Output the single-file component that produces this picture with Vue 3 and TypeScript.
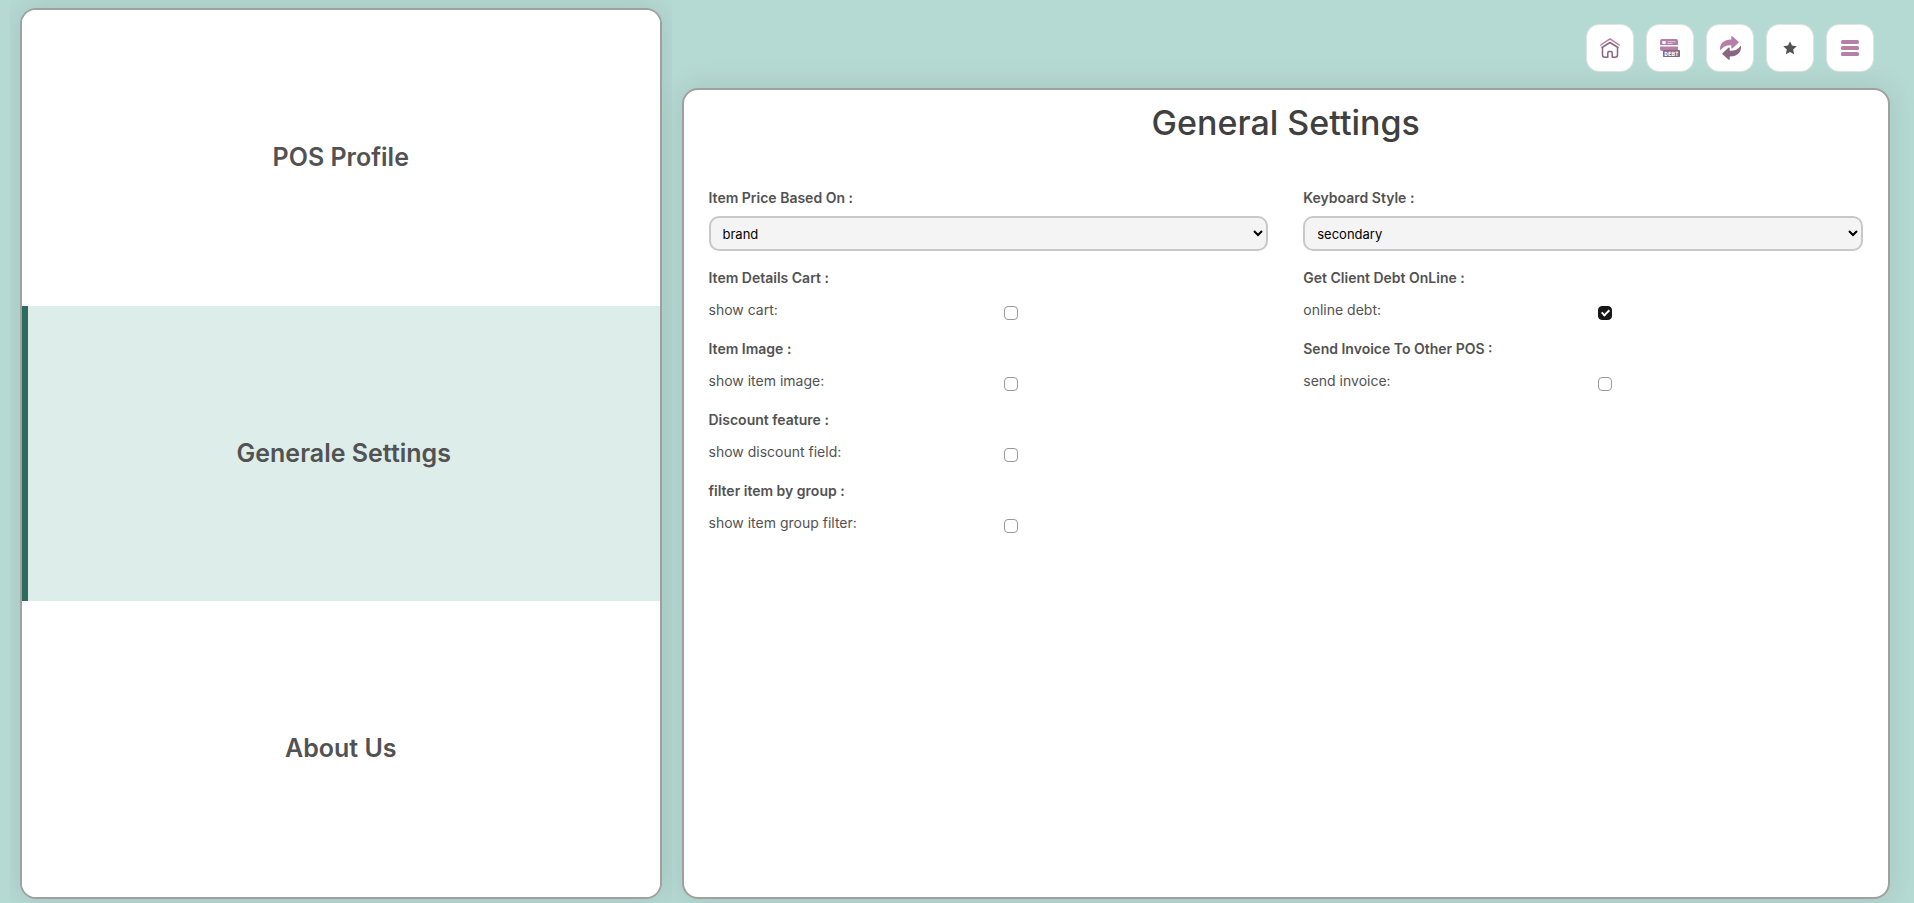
<script setup lang="ts">
import { ref } from 'vue'

interface CheckField {
  kind: 'check'
  id: string
  title: string
  label: string
  value: boolean
}
interface SelectField {
  kind: 'select'
  id: string
  title: string
  options: string[]
  value: string
}
type Field = CheckField | SelectField

const sections = ['POS Profile', 'Generale Settings', 'About Us']
const active = ref(1)

const columns = ref<Field[][]>([
  [
    { kind: 'select', id: 'price-base', title: 'Item Price Based On :', options: ['brand', 'priceList'], value: 'brand' },
    { kind: 'check', id: 'cart', title: 'Item Details Cart :', label: 'show cart:', value: false },
    { kind: 'check', id: 'image', title: 'Item Image :', label: 'show item image:', value: false },
    { kind: 'check', id: 'discount', title: 'Discount feature :', label: 'show discount field:', value: false },
    { kind: 'check', id: 'group', title: 'filter item by group :', label: 'show item group filter:', value: false },
  ],
  [
    { kind: 'select', id: 'keyboard', title: 'Keyboard Style :', options: ['primary', 'secondary'], value: 'secondary' },
    { kind: 'check', id: 'debt', title: 'Get Client Debt OnLine :', label: 'online debt:', value: true },
    { kind: 'check', id: 'invoice', title: 'Send Invoice To Other POS :', label: 'send invoice:', value: false },
  ],
])
</script>

<template>
  <div class="page">
    <aside class="side">
      <nav class="panel menu">
        <button
          v-for="(name, i) in sections"
          :key="name"
          type="button"
          class="menu-item"
          :class="{ active: i === active }"
          @click="active = i"
        >
          {{ name }}
        </button>
      </nav>
    </aside>

    <main class="content">
      <header class="toolbar">
        <button type="button" class="tool" aria-label="Home">
          <svg width="20" height="20" viewBox="0 0 20 20" fill="none" stroke-linecap="round" stroke-linejoin="round">
            <path d="M.8 7 10 .8 19.200 7" stroke="#b57fa6" stroke-width="1.500" />
            <path d="M2 9.500 10 4.500l8 5M2.500 9.200V17q0 2.200 2.200 2.200h3.100v-4.400q0-1.200 1.200-1.200h2q1.200 0 1.200 1.200v4.400h3.100q2.200 0 2.200-2.200V9.200" stroke="#8a6580" stroke-width="1.500" />
          </svg>
        </button>
        <button type="button" class="tool" aria-label="Debt">
          <svg width="20" height="18" viewBox="0 0 20 18">
            <path d="M2 0h14q2 0 2 2v4H0V2q0-2 2-2z" fill="#b57fa6" />
            <path d="M0 7.500h18v3.500H3v1H2q-2 0-2-2z" fill="#b57fa6" />
            <rect x="2.200" y="2" width="3.600" height="3" rx="1" fill="#fff" />
            <path d="M7.500 2.700h8M7.500 4.400h5" stroke="#e9d5e3" stroke-width=".8" />
            <rect x="3" y="11" width="17" height="7" rx=".8" fill="#8a6580" />
            <text class="debt-text" x="11.500" y="16.700" text-anchor="middle">DEBT</text>
          </svg>
        </button>
        <button type="button" class="tool" aria-label="Refresh">
          <svg width="21" height="24" viewBox="0 0 21 24">
            <path d="M.2 14.600C-.9 7.500 4 3.200 11.300 3.400V.8Q11.500-.4 12.600.4L18.300 5.600q.7.700 0 1.400l-5.700 5.200q-1.200.8-1.300-.6V9.200C6.500 9 3 10.500.2 14.600z" fill="#b57fa6" />
            <path d="M20.800 9.400C21.900 16.500 17 20.800 9.700 20.600v2.600q-.2 1.200-1.300.4L2.700 18.400q-.7-.7 0-1.400l5.700-5.200q1.200-.8 1.300.6v2.400c4.800.2 8.300-1.300 11.100-5.400z" fill="#8a6580" />
          </svg>
        </button>
        <button type="button" class="tool" aria-label="Favourites">
          <svg width="14" height="14" viewBox="0 0 14 14">
            <path d="m7 .3 2 4.300 4.700.6-3.500 3.200.9 4.800L7 10.900l-4.100 2.300.9-4.800L.3 5.200 5 4.600z" fill="#525252" />
          </svg>
        </button>
        <button type="button" class="tool" aria-label="Menu">
          <svg width="18" height="16" viewBox="0 0 18 16">
            <rect y="0" width="18" height="4" rx="1.600" fill="#b57fa6" />
            <rect y="6" width="18" height="4" rx="1.600" fill="#b57fa6" />
            <rect y="12" width="18" height="4" rx="1.600" fill="#b57fa6" />
          </svg>
        </button>
      </header>

      <section class="panel settings">
        <h1>General Settings</h1>
        <form class="columns" @submit.prevent>
          <div v-for="(fields, c) in columns" :key="c" class="column">
            <template v-for="field in fields" :key="field.id">
              <div v-if="field.kind === 'select'" class="select-field">
                <label class="title" :for="field.id">{{ field.title }}</label>
                <select :id="field.id" v-model="field.value">
                  <option v-for="o in field.options" :key="o" :value="o">{{ o }}</option>
                </select>
              </div>
              <div v-else class="check-field">
                <div class="title">{{ field.title }}</div>
                <div class="check-row">
                  <label :for="field.id">{{ field.label }}</label>
                  <input :id="field.id" v-model="field.value" type="checkbox" />
                </div>
              </div>
            </template>
          </div>
        </form>
      </section>
    </main>
  </div>
</template>

<style>
body {
  margin: 0;
  background: #b5dad3;
}
</style>

<style scoped>
.page {
  box-sizing: border-box;
  display: flex;
  height: 100vh;
  padding: 0 14px 0 10px;
  overflow: hidden;
  background: #b5dad3;
  color: #525252;
  font-family: Inter, "Liberation Sans", sans-serif;
  font-size: 14px;
}
.side {
  box-sizing: border-box;
  flex: 0 0 35%;
  padding: 8px 10px 4px;
  overflow: hidden;
}
.panel {
  box-sizing: border-box;
  border: 2px solid #a0a0a0;
  border-radius: 16px;
  background: #fff;
  box-shadow: 0 0 30px rgba(0, 0, 0, 0.1);
}
.menu {
  display: flex;
  flex-direction: column;
  height: 100%;
  overflow: hidden;
}
.menu-item {
  flex: 1;
  border: 0;
  padding: 0 0 2px;
  background: #fff;
  color: #525252;
  font: 600 25px/32px Inter, "Liberation Sans", sans-serif;
  cursor: pointer;
}
.menu-item.active {
  border-left: 6px solid #2d6a60;
  background: #ddede9;
}
.content {
  flex: 1;
  display: flex;
  flex-direction: column;
  min-width: 0;
  padding: 0 10px 4px;
}
.toolbar {
  display: flex;
  justify-content: flex-end;
  gap: 12px;
  padding: 24px 16px 16px;
}
.tool {
  display: grid;
  place-items: center;
  width: 48px;
  height: 48px;
  padding: 0;
  border: 1px solid #e2e2e2;
  border-radius: 13px;
  background: #fff;
  cursor: pointer;
}
.debt-text {
  fill: #fff;
  font: 700 6px "DejaVu Sans Mono", monospace;
}
.settings {
  flex: 1;
  padding: 11px 25px;
}
h1 {
  margin: 0 0 43px;
  color: #404040;
  font-size: 34px;
  line-height: 44px;
  font-weight: 500;
  text-align: center;
}
.columns {
  display: grid;
  grid-template-columns: 1fr 1fr;
  gap: 35px;
}
.title {
  display: block;
  font-weight: 600;
  line-height: 20px;
}
.select-field {
  margin-bottom: 17px;
}
select {
  box-sizing: border-box;
  width: 100%;
  height: 35px;
  margin-top: 8px;
  padding: 0 8px;
  border: 2px solid #c8c8c8;
  border-radius: 10px;
  background: #f4f4f4;
  color: #000;
  font: 13px Inter, "Liberation Sans", sans-serif;
}
.check-field {
  height: 71px;
}
.check-row {
  display: grid;
  grid-template-columns: 295px 1fr;
  align-items: start;
  padding-top: 12px;
  line-height: 20px;
}
input[type="checkbox"] {
  appearance: none;
  box-sizing: border-box;
  display: grid;
  place-items: center;
  width: 14px;
  height: 14px;
  margin: 6px 0 0;
  border: 1px solid #999;
  border-radius: 4px;
  background: #fff;
}
input[type="checkbox"]:checked {
  border-color: #171717;
  background: #171717;
}
input[type="checkbox"]:checked::after {
  content: "";
  width: 3px;
  height: 6px;
  margin-bottom: 2px;
  border: solid #fff;
  border-width: 0 2px 2px 0;
  transform: rotate(45deg);
}
</style>
